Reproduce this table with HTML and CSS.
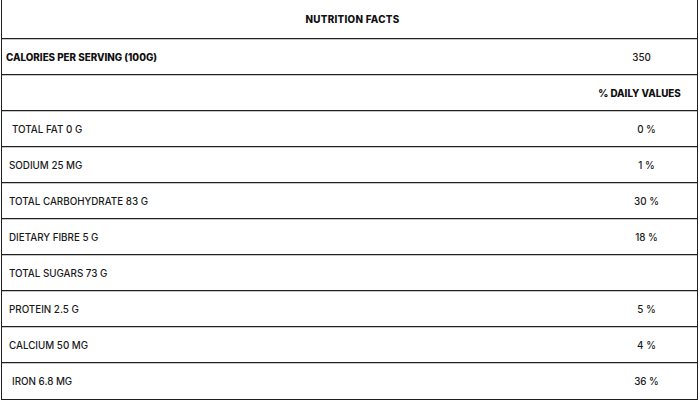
FILE: index.html
```html
<!DOCTYPE html>
<html>
<head>
<meta charset="utf-8">
<link rel="stylesheet" href="styles.css">
</head>
<body>
<div class="facts">
  <div class="row head"><div class="title">NUTRITION FACTS</div></div>
  <div class="row"><div class="label cal bold">CALORIES PER SERVING (100G)</div><div class="val cv">350</div></div>
  <div class="row"><div class="label"></div><div class="val dv bold">% DAILY VALUES</div></div>
  <div class="row"><div class="label ind">TOTAL FAT 0 G</div><div class="val">0 %</div></div>
  <div class="row"><div class="label">SODIUM 25 MG</div><div class="val">1 %</div></div>
  <div class="row"><div class="label">TOTAL CARBOHYDRATE 83 G</div><div class="val">30 %</div></div>
  <div class="row"><div class="label">DIETARY FIBRE 5 G</div><div class="val">18 %</div></div>
  <div class="row"><div class="label">TOTAL SUGARS 73 G</div><div class="val"></div></div>
  <div class="row"><div class="label">PROTEIN 2.5 G</div><div class="val">5 %</div></div>
  <div class="row"><div class="label">CALCIUM 50 MG</div><div class="val">4 %</div></div>
  <div class="row last"><div class="label ind">IRON 6.8 MG</div><div class="val">36 %</div></div>
</div>
</body>
</html>
```
FILE: styles.css
```css
html, body { margin: 0; padding: 0; background: #fff; }
body {
  font-family: Inter, "Noto Sans", sans-serif;
  font-size: 9.8px;
  font-weight: 500;
  color: #1a1a1a;
}
.facts {
  width: 697px;
  height: 400px;
  margin-left: 1px;
  border-left: 1px solid #1f1f1f;
  border-right: 1px solid #1f1f1f;
  display: grid;
  grid-template-rows: 39px repeat(9, 36px) 1fr;
  box-sizing: border-box;
}
.row {
  display: grid;
  grid-template-columns: 1fr 117px;
  align-items: center;
  border-bottom: 1px solid #1f1f1f;
}
.row + .row { border-top: 1px solid #c8c8c8; }
.head { grid-template-columns: 1fr; }
.title { text-align: center; font-weight: 800; letter-spacing: 0.3px; padding-top: 1px; padding-left: 6px; color: #111; }
.bold { font-weight: 800; color: #111; }
.label { padding-left: 7px; white-space: pre; }
.label.cal { padding-left: 4px; }
.label.ind { padding-left: 10px; }
.val { text-align: center; padding-left: 16px; }
.val.cv { padding-left: 6px; }
.val.dv { padding-left: 2px; }
```
